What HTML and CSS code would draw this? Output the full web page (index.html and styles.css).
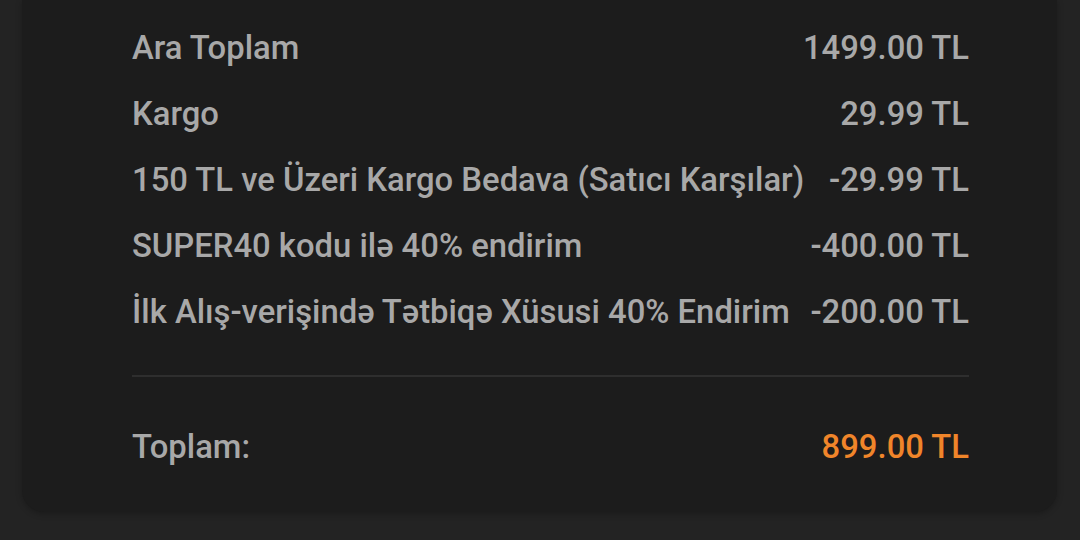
FILE: index.html
```html
<!DOCTYPE html>
<html lang="tr">
<head>
<meta charset="utf-8">
<link rel="stylesheet" href="styles.css">
</head>
<body>
<div class="page">
  <section class="card">
    <div class="row"><span>Ara Toplam</span><span>1499.00 TL</span></div>
    <div class="row"><span>Kargo</span><span>29.99 TL</span></div>
    <div class="row"><span>150 TL ve Üzeri Kargo Bedava (Satıcı Karşılar)</span><span>-29.99 TL</span></div>
    <div class="row"><span>SUPER40 kodu ilə 40% endirim</span><span>-400.00 TL</span></div>
    <div class="row"><span>İlk Alış-verişində Tətbiqə Xüsusi 40% Endirim</span><span>-200.00 TL</span></div>
    <div class="divider"></div>
    <div class="row total"><span>Toplam:</span><span class="amount">899.00 TL</span></div>
  </section>
</div>
</body>
</html>
```
FILE: styles.css
```css
html, body {
  margin: 0;
  padding: 0;
  background: #232323;
}
body {
  width: 1080px;
  height: 540px;
  overflow: hidden;
  font-family: Roboto, "Noto Sans", sans-serif;
}
.page {
  padding: 0 23px 28px 22px;
}
.card {
  background: #1c1c1c;
  border-radius: 0 0 22px 22px;
  padding: 15px 88px 32px 110px;
  box-shadow: 0 2px 6px rgba(0,0,0,0.25);
}
.row {
  display: flex;
  justify-content: space-between;
  align-items: center;
  height: 66px;
  font-size: 32.8px;
  font-weight: 500;
  color: #a8a8a8;
  white-space: nowrap;
}
.divider {
  height: 2px;
  background: #2e2e2e;
  margin: 30px 0 37px;
}
.amount {
  color: #f0852a;
}
```
